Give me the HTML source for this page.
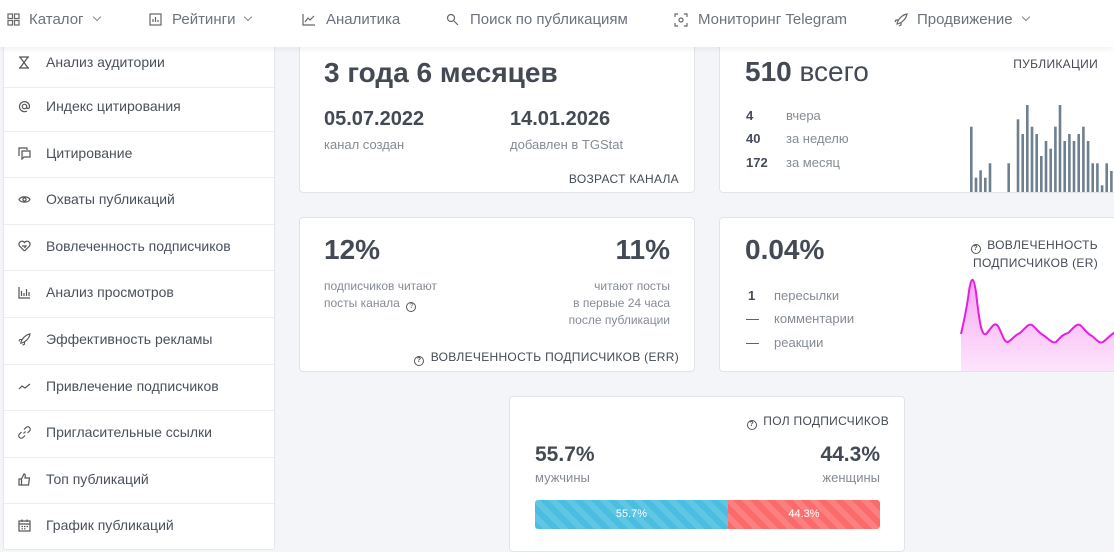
<!DOCTYPE html>
<html><head><meta charset="utf-8"><style>
*{box-sizing:border-box;margin:0;padding:0}
body{width:1114px;height:551px;overflow:hidden;background:#f4f5f8;font-family:"Liberation Sans",sans-serif;color:#454c57;position:relative}
.nav{position:absolute;left:0;top:0;width:1114px;height:47px;background:#fff;box-shadow:0 2px 6px rgba(0,0,0,.06);z-index:5}
.nav span{position:absolute;top:11px;font-size:15px;color:#6c737d}
.nav svg{position:absolute;top:13px}
.chev{display:inline-block;width:6px;height:6px;border-right:1.2px solid #888;border-bottom:1.2px solid #888;transform:rotate(45deg);margin-left:10px;vertical-align:4px}
.side{position:absolute;left:3px;top:40px;width:272px;height:510px;background:#fff;border:1px solid #e4e6ea;border-radius:3px}
.it{position:absolute;left:0;width:270px;height:46.6px;border-bottom:1px solid #eceef1;font-size:14px;color:#4a515b}
.it b{font-weight:normal;position:absolute;left:42px;top:13px}
.it svg{position:absolute;left:14px;top:15px}
.card{position:absolute;background:#fff;border:1px solid #e2e4e8;border-radius:4px}
.t{position:absolute;white-space:nowrap}
.big{font-size:28px;font-weight:bold;color:#434a54}
.mid{font-size:20px;font-weight:bold;color:#434a54}
.lbl{font-size:13px;color:#858b94}
.cap{font-size:12px;color:#444b55;letter-spacing:.3px}
.q{display:inline-block;width:10px;height:10px;border:1.2px solid #555;border-radius:50%;font-size:7px;line-height:8px;text-align:center;font-weight:bold;vertical-align:-1px;margin-right:3px}
</style></head><body>
<div class="nav">
<svg style="left:7px" width="13" height="13" viewBox="0 0 13 13" fill="none" stroke="#666" stroke-width="1.2"><rect x="1" y="1" width="4.5" height="4.5"/><rect x="7.5" y="1" width="4.5" height="4.5"/><rect x="1" y="7.5" width="4.5" height="4.5"/><rect x="7.5" y="7.5" width="4.5" height="4.5"/></svg>
<span style="left:29px">Каталог<i class="chev"></i></span>
<svg style="left:149px" width="13" height="13" viewBox="0 0 13 13" fill="none" stroke="#666" stroke-width="1.2"><rect x="1" y="1" width="11" height="11"/><path d="M4 9V6M6.5 9V4M9 9V7"/></svg>
<span style="left:172px">Рейтинги<i class="chev"></i></span>
<svg style="left:302px" width="14" height="13" viewBox="0 0 14 13" fill="none" stroke="#666" stroke-width="1.2"><path d="M1 1V12H13M3 9L6 5L8 7L12 3"/></svg>
<span style="left:326px">Аналитика</span>
<svg style="left:446px" width="14" height="14" viewBox="0 0 14 14" fill="none" stroke="#666" stroke-width="1.2"><circle cx="5" cy="5" r="3.5"/><path d="M8 8L12 12"/></svg>
<span style="left:470px">Поиск по публикациям</span>
<svg style="left:674px" width="14" height="14" viewBox="0 0 14 14" fill="none" stroke="#666" stroke-width="1.2"><path d="M1 4V1H4M10 1H13V4M13 10V13H10M4 13H1V10"/><circle cx="7" cy="7" r="2"/></svg>
<span style="left:698px">Мониторинг Telegram</span>
<svg style="left:894px" width="14" height="14" viewBox="0 0 14 14" fill="none" stroke="#666" stroke-width="1.2"><path d="M3 11C4 6 8 2 13 1C12 6 8 10 3 11ZM5 7L2 7L1 9M7 9V12L5 13"/></svg>
<span style="left:917px">Продвижение<i class="chev"></i></span>
</div>

<div class="side">
<div class="it" style="top:0"><svg width="12" height="13" viewBox="0 0 12 13" fill="none" stroke="#555" stroke-width="1.2"><path d="M1 1H11M1 12H11M2 1L10 12M10 1L2 12"/></svg><b>Анализ аудитории</b></div>
<div class="it" style="top:44px"><svg width="13" height="13" viewBox="0 0 13 13" fill="none" stroke="#555" stroke-width="1.2"><circle cx="6.5" cy="6.5" r="2.2"/><path d="M8.7 6.5V7.5C8.7 9 11.5 9 11.5 6.5A5 5 0 1 0 9 11"/></svg><b>Индекс цитирования</b></div>
<div class="it" style="top:90.6px"><svg width="13" height="13" viewBox="0 0 13 13" fill="none" stroke="#555" stroke-width="1.2"><path d="M1 9V1H9V3M4 4H12V10H6L4 12Z"/></svg><b>Цитирование</b></div>
<div class="it" style="top:137.2px"><svg width="13" height="13" viewBox="0 0 13 13" fill="none" stroke="#555" stroke-width="1.2"><path d="M1 6.5C3 3 10 3 12 6.5C10 10 3 10 1 6.5Z"/><circle cx="6.5" cy="6.5" r="1.6"/></svg><b>Охваты публикаций</b></div>
<div class="it" style="top:183.8px"><svg width="13" height="13" viewBox="0 0 13 13" fill="none" stroke="#555" stroke-width="1.2"><path d="M6.5 11L1.5 6A3 3 0 0 1 6.5 2.5A3 3 0 0 1 11.5 6L6.5 11M4 6H8L6.5 8"/></svg><b>Вовлеченность подписчиков</b></div>
<div class="it" style="top:230.4px"><svg width="13" height="13" viewBox="0 0 13 13" fill="none" stroke="#555" stroke-width="1.2"><path d="M1 1V12H12M3.5 10V5M6 10V7M8.5 10V3M11 10V6"/></svg><b>Анализ просмотров</b></div>
<div class="it" style="top:277px"><svg width="13" height="13" viewBox="0 0 14 14" fill="none" stroke="#555" stroke-width="1.2"><path d="M3 11C4 6 8 2 13 1C12 6 8 10 3 11ZM5 7L2 7L1 9M7 9V12L5 13"/></svg><b>Эффективность рекламы</b></div>
<div class="it" style="top:323.6px"><svg width="13" height="13" viewBox="0 0 13 13" fill="none" stroke="#555" stroke-width="1.2"><path d="M1 9L4 6L7 8L12 4"/></svg><b>Привлечение подписчиков</b></div>
<div class="it" style="top:370.2px"><svg width="13" height="13" viewBox="0 0 13 13" fill="none" stroke="#555" stroke-width="1.2"><path d="M5.5 7.5L7.5 5.5M6 3.5L8 1.5A2 2 0 0 1 11.5 5L9.5 7M7 9.5L5 11.5A2 2 0 0 1 1.5 8L3.5 6"/></svg><b>Пригласительные ссылки</b></div>
<div class="it" style="top:416.8px"><svg width="13" height="13" viewBox="0 0 13 13" fill="none" stroke="#555" stroke-width="1.2"><path d="M1 6H3.5V12H1ZM3.5 6L6 1C7.5 1 7.5 2.5 7 5H11.5L10.5 12H3.5"/></svg><b>Топ публикаций</b></div>
<div class="it" style="top:463.4px;border:none"><svg width="13" height="13" viewBox="0 0 13 13" fill="none" stroke="#555" stroke-width="1.2"><rect x="1" y="2" width="11" height="10"/><path d="M1 5H12M4 0.5V3M9 0.5V3M3.5 7.5H5M6 7.5H7.5M8.5 7.5H10M3.5 9.8H5M6 9.8H7.5"/></svg><b>График публикаций</b></div>
</div>

<div class="card" style="left:299px;top:30px;width:396px;height:163px">
<div class="t big" style="left:24px;top:26px">3 года 6 месяцев</div>
<div class="t mid" style="left:24px;top:77px">05.07.2022</div>
<div class="t lbl" style="left:24px;top:106px">канал создан</div>
<div class="t mid" style="left:210px;top:77px">14.01.2026</div>
<div class="t lbl" style="left:210px;top:106px">добавлен в TGStat</div>
<div class="t cap" style="right:15px;top:141px">ВОЗРАСТ КАНАЛА</div>
</div>

<div class="card" style="left:719px;top:30px;width:400px;height:163px;overflow:hidden">
<div class="t big" style="left:25px;top:25px">510 <span style="font-weight:normal">всего</span></div>
<div class="t cap" style="right:20px;top:26px">ПУБЛИКАЦИИ</div>
<div class="t" style="left:26px;top:77px;font-size:13px;font-weight:bold">4</div><div class="t lbl" style="left:66px;top:77px">вчера</div>
<div class="t" style="left:26px;top:100px;font-size:13px;font-weight:bold">40</div><div class="t lbl" style="left:66px;top:100px">за неделю</div>
<div class="t" style="left:26px;top:124px;font-size:13px;font-weight:bold">172</div><div class="t lbl" style="left:66px;top:124px">за месяц</div>
<svg class="t" style="left:249px;top:0" width="150" height="162">
<g fill="#6e7f8f" id="bars"></g>
</svg>
</div>

<div class="card" style="left:299px;top:217px;width:396px;height:155px">
<div class="t big" style="left:24px;top:16px">12%</div>
<div class="t lbl" style="left:24px;top:60px;font-size:12px;line-height:17px">подписчиков читают<br>посты канала &nbsp;<span class="q">?</span></div>
<div class="t big" style="right:24px;top:16px">11%</div>
<div class="t lbl" style="right:24px;top:60px;font-size:12px;line-height:17px;text-align:right">читают посты<br>в первые 24 часа<br>после публикации</div>
<div class="t cap" style="right:15px;top:132px"><span class="q">?</span> ВОВЛЕЧЕННОСТЬ ПОДПИСЧИКОВ (ERR)</div>
</div>

<div class="card" style="left:719px;top:217px;width:400px;height:155px;overflow:hidden">
<div class="t big" style="left:25px;top:16px">0.04%</div>
<div class="t cap" style="right:20px;top:18px;text-align:right;line-height:18px"><span class="q">?</span> ВОВЛЕЧЕННОСТЬ<br>ПОДПИСЧИКОВ (ER)</div>
<div class="t" style="left:28px;top:70px;font-size:13px;font-weight:bold">1</div><div class="t lbl" style="left:54px;top:70px">пересылки</div>
<div class="t" style="left:26px;top:93px;font-size:13px">—</div><div class="t lbl" style="left:54px;top:93px">комментарии</div>
<div class="t" style="left:26px;top:117px;font-size:13px">—</div><div class="t lbl" style="left:54px;top:117px">реакции</div>
<svg class="t" style="left:0;top:0" width="400" height="155" viewBox="719 217 400 155">
<defs><linearGradient id="g" x1="0" y1="0" x2="0" y2="1"><stop offset="0" stop-color="#f7a8f3"/><stop offset="1" stop-color="#fde6fc"/></linearGradient></defs>
<path d="M960 333C963 320 966 307 968 290C970 277 973 270 976 300C979 325 981 335 985 333C990 328 993 320 997 325C1001 332 1003 342 1007 341C1012 338 1015 333 1019 332C1024 328 1027 322 1031 324C1035 327 1038 332 1042 334C1047 337 1051 343 1055 341C1059 337 1062 333 1067 332C1071 329 1075 322 1079 324C1083 327 1086 333 1091 335C1095 338 1098 343 1102 341C1106 338 1110 333 1116 330L1116 372L960 372Z" fill="url(#g)"/>
<path d="M960 333C963 320 966 307 968 290C970 277 973 270 976 300C979 325 981 335 985 333C990 328 993 320 997 325C1001 332 1003 342 1007 341C1012 338 1015 333 1019 332C1024 328 1027 322 1031 324C1035 327 1038 332 1042 334C1047 337 1051 343 1055 341C1059 337 1062 333 1067 332C1071 329 1075 322 1079 324C1083 327 1086 333 1091 335C1095 338 1098 343 1102 341C1106 338 1110 333 1116 330" fill="none" stroke="#e51ee0" stroke-width="2"/>
</svg>
</div>

<div class="card" style="left:509px;top:396px;width:396px;height:156px">
<div class="t cap" style="right:15px;top:17px"><span class="q">?</span> ПОЛ ПОДПИСЧИКОВ</div>
<div class="t mid" style="left:25px;top:46px;font-size:21px">55.7%</div>
<div class="t lbl" style="left:25px;top:73px">мужчины</div>
<div class="t mid" style="right:24px;top:46px;font-size:21px">44.3%</div>
<div class="t lbl" style="right:24px;top:73px">женщины</div>
<div class="t" style="left:25px;top:103px;width:345px;height:29px;border-radius:3px;overflow:hidden;display:flex;font-size:11px;color:#fff;line-height:29px;text-align:center">
<div style="width:193px;background:repeating-linear-gradient(45deg,#4bbde0 0 6px,#5fc6e4 6px 12px)">55.7%</div>
<div style="flex:1;background:repeating-linear-gradient(45deg,#fb6b6b 0 6px,#fc8080 6px 12px)">44.3%</div>
</div>
</div>

<script>
var tops=[257,410,388,410,367,453,453,453,367,453,235,279,192,257,279,345,300,323,257,192,300,279,300,279,257,300,367,367,433,367,390,420];
var g=document.getElementById('bars'),s='';
tops.forEach(function(t,i){var x=1+i*4.67,y=(t/3+40)-30,h=161.6-y;if(h<0.6)h=0.6;s+='<rect x="'+x.toFixed(1)+'" y="'+y.toFixed(1)+'" width="2.6" height="'+h.toFixed(1)+'"/>';});
g.innerHTML=s;
</script>
</body></html>
